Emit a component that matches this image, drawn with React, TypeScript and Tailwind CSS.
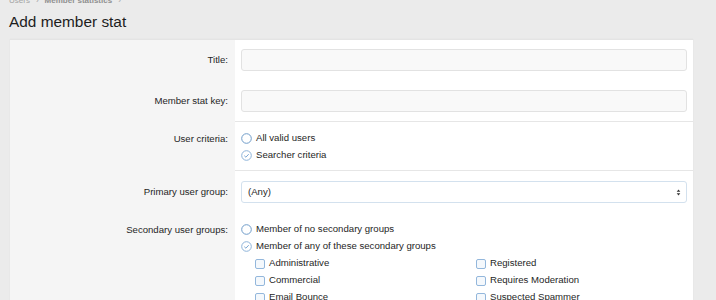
import { ReactNode } from "react";

const Radio = ({ checked }: { checked?: boolean }) => (
  <svg width="11" height="11" viewBox="0 0 11 11" className="shrink-0">
    <circle cx="5.5" cy="5.5" r="4.8" fill="white" stroke={checked ? "#8db3d9" : "#6f9cc9"} strokeWidth="1" />
    {checked && <path d="M3.3 5.7 L4.9 7.2 L7.7 4.2" fill="none" stroke="#7aa6d2" strokeWidth="1" />}
  </svg>
);

const Box = () => (
  <span className="w-[10px] h-[10px] shrink-0 rounded-[2px] border border-[#93b7dc] bg-[#f4f8fc]" />
);

const Option = ({ checked, children }: { checked?: boolean; children: ReactNode }) => (
  <div className="flex items-center gap-[4px] h-[17px]">
    <Radio checked={checked} />
    <span>{children}</span>
  </div>
);

const Check = ({ children }: { children: ReactNode }) => (
  <div className="flex items-center gap-[4px] h-[17px]">
    <Box />
    <span>{children}</span>
  </div>
);

const Label = ({ children, lh = "leading-[22px]" }: { children: ReactNode; lh?: string }) => (
  <div className={`text-right pr-[7px] ${lh}`}>{children}</div>
);

const TextInput = () => (
  <div className="h-[22px] rounded-[3px] border border-[#e2e2e2] bg-[#f9f9f9]" />
);

export default function App() {
  return (
    <div
      className="min-h-[300px] bg-[#ebebeb] text-[9.6px] text-[#262626] overflow-hidden"
      style={{ fontFamily: '"Liberation Sans", Arial, sans-serif' }}
    >
      <div className="pl-[9px] h-[8px] flex items-end text-[8px] leading-[8px] text-[#a3a3a3] -mt-[3px]">
        <span>Users</span>
        <span className="px-[6px]">›</span>
        <span className="font-bold text-[#8f8f8f]">Member statistics</span>
        <span className="px-[6px]">›</span>
      </div>
      <h1 className="pl-[9px] pt-[7px] text-[15.4px] leading-[20px] text-[#1d1d1d]">Add member stat</h1>
      <div className="ml-[10px] mt-[7px] w-[683px] border-t border-[#e4e4e4] bg-white shadow-[0_0_1px_rgba(0,0,0,0.08)]">
        <div className="grid grid-cols-[225px_1fr]">
          {/* title + key */}
          <div className="bg-[#f5f5f5] pt-[9px] pb-[9px]">
            <Label>Title:</Label>
          </div>
          <div className="px-[6px] pt-[9px] pb-[9px]">
            <TextInput />
          </div>
          <div className="bg-[#f5f5f5] pt-[10px] pb-[9px]">
            <Label>Member stat key:</Label>
          </div>
          <div className="px-[6px] pt-[10px] pb-[9px]">
            <TextInput />
          </div>

          {/* user criteria */}
          <div className="bg-[#f5f5f5] pt-[9px] pb-[6px]">
            <Label lh="leading-[17px]">User criteria:</Label>
          </div>
          <div className="border-t border-[#e6e6e6] px-[6px] pt-[8px] pb-[6px]">
            <Option>All valid users</Option>
            <Option checked>Searcher criteria</Option>
          </div>

          {/* primary group */}
          <div className="bg-[#f5f5f5] pt-[11px] pb-[10px]">
            <Label>Primary user group:</Label>
          </div>
          <div className="border-t border-[#e6e6e6] px-[6px] pt-[10px] pb-[10px]">
            <div className="h-[22px] rounded-[3px] border border-[#d3e1ee] bg-white flex items-center justify-between pl-[6px] pr-[5px]">
              <span>(Any)</span>
              <svg width="5" height="7" viewBox="0 0 5 7">
                <path d="M2.5 0.5 L4.3 2.8 L0.7 2.8 Z M2.5 6.5 L4.3 4.2 L0.7 4.2 Z" fill="#333" />
              </svg>
            </div>
          </div>

          {/* secondary groups */}
          <div className="bg-[#f5f5f5] pt-[8px] pb-[20px]">
            <Label lh="leading-[17px]">Secondary user groups:</Label>
          </div>
          <div className="px-[6px] pt-[8px] pb-[10px]">
            <Option>Member of no secondary groups</Option>
            <Option checked>Member of any of these secondary groups</Option>
            <div className="pl-[14px] grid grid-cols-[221px_1fr]">
              <Check>Administrative</Check>
              <Check>Registered</Check>
              <Check>Commercial</Check>
              <Check>Requires Moderation</Check>
              <Check>Email Bounce</Check>
              <Check>Suspected Spammer</Check>
            </div>
          </div>
        </div>
      </div>
    </div>
  );
}
